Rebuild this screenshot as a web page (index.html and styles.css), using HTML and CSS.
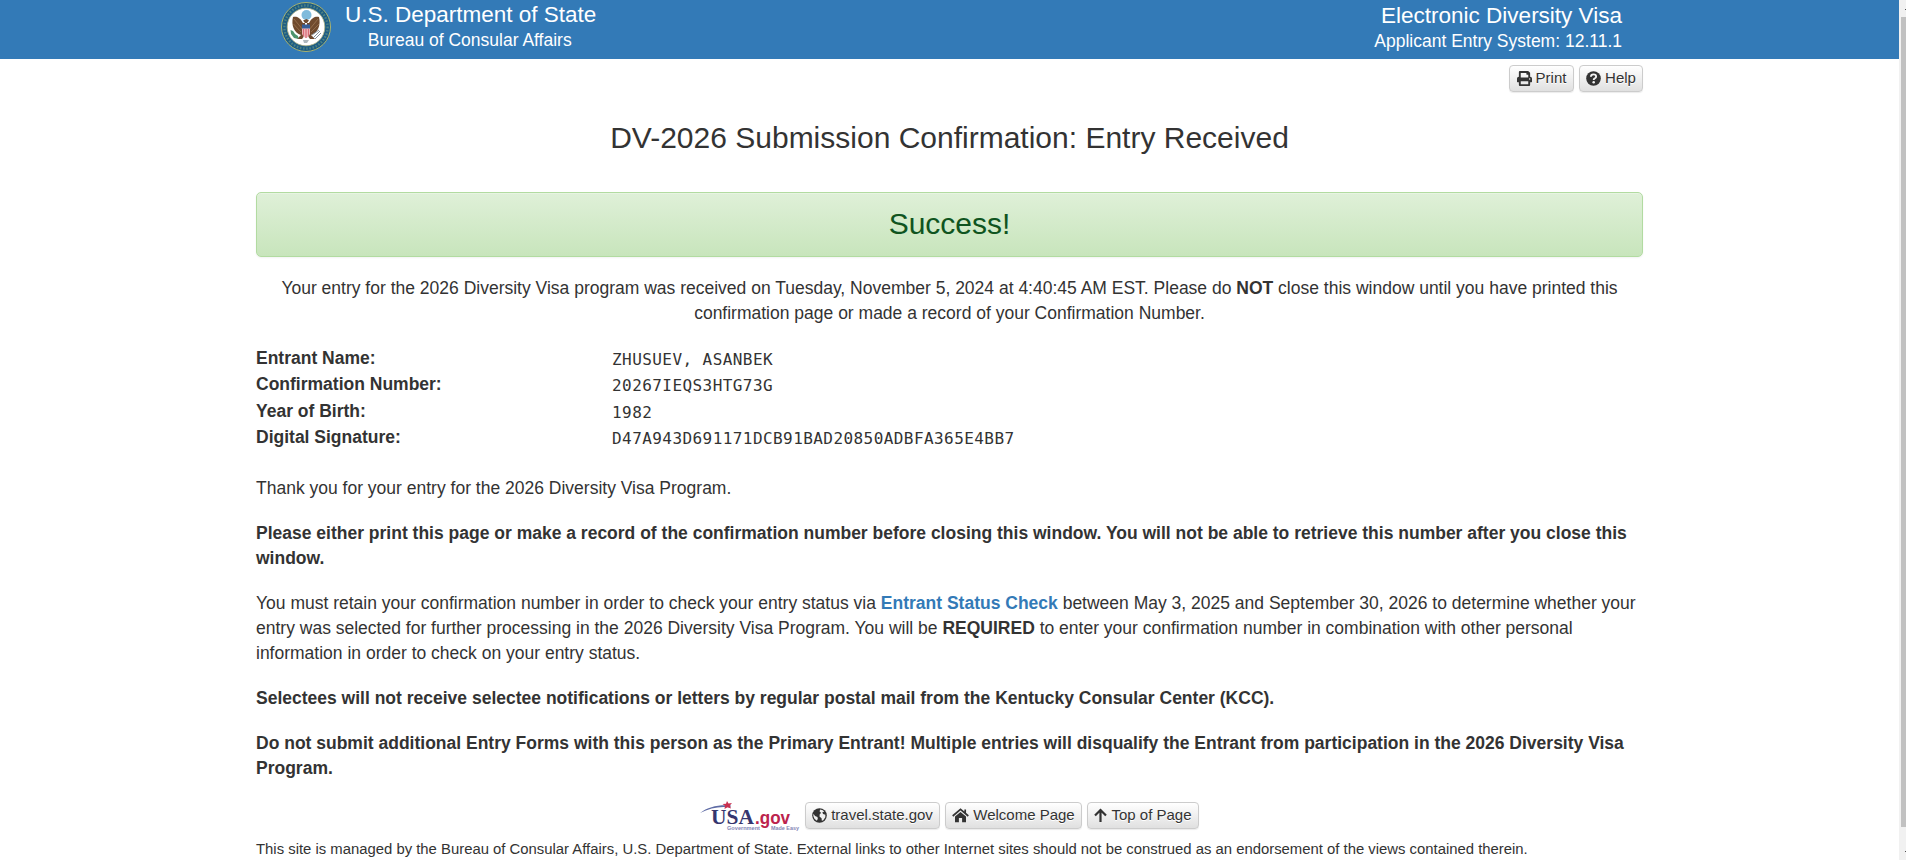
FILE: index.html
```html
<!DOCTYPE html>
<html lang="en">
<head>
<meta charset="utf-8">
<title>DV-2026 Submission Confirmation</title>
<link rel="stylesheet" href="styles.css">
</head>
<body>
<div class="viewport">
<div class="page">
  <header class="banner">
    <div class="brand">
      <svg class="seal" viewBox="0 0 50 50" width="50" height="50">
        <circle cx="25" cy="25" r="24.5" fill="#1d5c84" stroke="#a9b36f"/>
        <circle cx="25" cy="25" r="21.600" fill="none" stroke="#4e8383" stroke-width="2.400" stroke-dasharray="1.5 1.7"/>
        <circle cx="25" cy="25" r="18.8" fill="#fff" stroke="#b7b783" stroke-width=".8"/>
        <circle cx="25.500" cy="13" r="5" fill="#80bbdc"/>
        <path d="M22 21C19 15 15 14 12 15C10 23 13 31 20 33L16 37L21 37L24 33V21L22 18.500L25.500 17L28 18.500L26 21V33L29 37L34 37L30 33C37 31 40 23 38 15C35 14 31 15 28 21Z" fill="#704a2e"/>
        <path d="M13 17L22 28M12.500 22L20 30M37 17L28 28M38 22L30 30" stroke="#a27c59" stroke-width=".7"/>
        <path d="M21 23H29V32Q28 35 25 36Q22 35 21 32Z" fill="#efb9bd"/>
        <path d="M22.500 27V34M25 27V36M27.500 27V34" stroke="#d86c75" stroke-width="1.200"/>
        <path d="M21 22.500H29V26.500H21Z" fill="#355d97"/>
        <path d="M9.500 28L12 29L14 32L17 34L17.500 37L13 36L10 32Z" fill="#4c946d"/>
        <path d="M32 36L39 29M34 37L40 31M31 33L38 28" stroke="#85919a"/>
        <path d="M22 38L28 38L26 41H23Z" fill="#aeb8bd"/>
      </svg>
      <div class="brand-text">
        <div class="banner-title dept">U.S. Department of State</div>
        <div class="banner-sub bureau">Bureau of Consular Affairs</div>
      </div>
    </div>
    <div class="system">
      <div class="banner-title edv">Electronic Diversity Visa</div>
      <div class="banner-sub version">Applicant Entry System: 12.11.1</div>
    </div>
  </header>
  <main class="container">
    <nav class="toolbar">
      <a class="btn print"><svg viewBox="0 0 512 512" width="15" height="15"><path d="M448 192V77a32 32 0 0 0-9-22L393 9a32 32 0 0 0-22-9H96a32 32 0 0 0-32 32v160a64 64 0 0 0-64 64v112a16 16 0 0 0 16 16h48v96a32 32 0 0 0 32 32h320a32 32 0 0 0 32-32v-96h48a16 16 0 0 0 16-16V256a64 64 0 0 0-64-64zm-64 256H128v-96h256v96zm0-224H128V64h192v48a16 16 0 0 0 16 16h48v96zm48 72a24 24 0 1 1 0-48 24 24 0 0 1 0 48z"/></svg><span>Print</span></a>
      <a class="btn help"><svg viewBox="0 0 16 16" width="15" height="15"><circle cx="8" cy="8" r="7.800"/><path d="M5.200 6.200C5.200 4.500 6.500 3.600 8 3.600C9.700 3.600 10.800 4.600 10.800 6C10.800 7.900 8.200 7.700 8.200 9.500" fill="none" stroke="#f3f3f3" stroke-width="2"/><circle cx="8.200" cy="12" r="1.350" fill="#f3f3f3"/></svg><span>Help</span></a>
    </nav>
    <h1 class="title">DV-2026 Submission Confirmation: Entry Received</h1>
    <div class="alert">Success!</div>
    <p class="received">Your entry for the 2026 Diversity Visa program was received on Tuesday, November 5, 2024 at 4:40:45 AM EST. Please do <b>NOT</b> close this window until you have printed this<br>confirmation page or made a record of your Confirmation Number.</p>
    <dl class="record">
      <dt>Entrant Name:</dt><dd>ZHUSUEV, ASANBEK</dd>
      <dt>Confirmation Number:</dt><dd>20267IEQS3HTG73G</dd>
      <dt>Year of Birth:</dt><dd>1982</dd>
      <dt>Digital Signature:</dt><dd>D47A943D691171DCB91BAD20850ADBFA365E4BB7</dd>
    </dl>
    <p>Thank you for your entry for the 2026 Diversity Visa Program.</p>
    <p><b>Please either print this page or make a record of the confirmation number before closing this window. You will not be able to retrieve this number after you close this<br>window.</b></p>
    <p>You must retain your confirmation number in order to check your entry status via <a class="link">Entrant Status Check</a> between May 3, 2025 and September 30, 2026 to determine whether your<br>entry was selected for further processing in the 2026 Diversity Visa Program. You will be <b>REQUIRED</b> to enter your confirmation number in combination with other personal<br>information in order to check on your entry status.</p>
    <p><b>Selectees will not receive selectee notifications or letters by regular postal mail from the Kentucky Consular Center (KCC).</b></p>
    <p><b>Do not submit additional Entry Forms with this person as the Primary Entrant! Multiple entries will disqualify the Entrant from participation in the 2026 Diversity Visa<br>Program.</b></p>
    <div class="links">
      <svg class="usagov" viewBox="0 0 100 30" width="100" height="30">
        <path d="M0 12C8 6 18 3.500 31 4.500L30 6.500C20 5 10 7 0 12Z" fill="#5f6ca5"/>
        <path d="M27 0L28.500 2.600L32 2L29.800 4.600L31 7.500L27.500 6.300L24.500 8L25 4.800L22.500 3L26 2.700Z" fill="#c9304f"/>
        <text x="11" y="23" class="logo-usa" textLength="43" lengthAdjust="spacingAndGlyphs">USA</text>
        <text x="55" y="23" class="logo-gov" textLength="35" lengthAdjust="spacingAndGlyphs">.gov</text>
        <text x="27" y="28.500" class="logo-tag" textLength="33" lengthAdjust="spacingAndGlyphs">Government</text>
        <text x="71" y="28.500" class="logo-tag" textLength="28" lengthAdjust="spacingAndGlyphs">Made Easy</text>
      </svg>
      <a class="btn travel"><svg viewBox="0 0 16 16" width="15" height="15"><circle cx="8" cy="8" r="7.800"/><path d="M8.800 1.600L11.500 2.300L13 4L11 4.600L11.800 6.500L14.300 7.300L14.200 9.800L12 13L10.500 13.500L10.200 10.800L8 9L8.300 6.300L9.800 5.200L8 3.500ZM1.600 6L3.200 8.500L5.800 9.600L6.200 11.400L5.200 13.600L2.600 11.500L1.400 8.500Z" fill="#f0f0f0"/></svg><span>travel.state.gov</span></a>
      <a class="btn welcome"><svg viewBox="0 0 17 15" width="17" height="15"><path d="M8.500 4L3 8.600V14.200H6.900V10H10.100V14.200H14V8.600Z"/><path d="M.7 8L8.500 1.400L16.300 8M13.200 1.500V5" fill="none" stroke="#333" stroke-width="1.700"/></svg><span>Welcome Page</span></a>
      <a class="btn top"><svg viewBox="0 0 13 15" width="13" height="15"><path d="M1 7.500L6.500 2L12 7.500M6.500 2.500V14" fill="none" stroke="#333" stroke-width="2.200"/></svg><span>Top of Page</span></a>
    </div>
    <p class="disclaimer">This site is managed by the Bureau of Consular Affairs, U.S. Department of State. External links to other Internet sites should not be construed as an endorsement of the views contained therein.</p>
  </main>
</div>
<div class="scrollbar"><div class="up"></div><div class="thumb"></div><div class="down"></div></div>
</div>
</body>
</html>
```
FILE: styles.css
```css
* { box-sizing: border-box; }
body {
  margin: 0;
  overflow: hidden;
  background: #fff;
  color: #333;
  font: 17.5px/25px "Liberation Sans", Arial, sans-serif;
}
.viewport { display: flex; height: 860px; overflow: hidden; }
.page { width: 1899px; flex: none; }
.banner {
  height: 59px;
  background: #337ab7;
  color: #fff;
  display: flex;
  justify-content: space-between;
  padding: 0 277px 0 281px;
}
.brand { display: flex; gap: 14px; }
.seal { margin-top: 2px; display: block; }
.brand-text { text-align: center; }
.bureau { margin-right: 2px; }
.system { text-align: right; padding-top: 1px; }
.banner-title { font-size: 22.5px; line-height: 30px; white-space: nowrap; }
.banner-sub { font-size: 17.5px; line-height: 20px; white-space: nowrap; }
.container { width: 1387px; margin-left: 256px; }
.toolbar { display: flex; justify-content: flex-end; gap: 5px; padding-top: 6px; }
.btn {
  display: flex;
  align-items: center;
  justify-content: center;
  gap: 4px;
  height: 27px;
  border: 1px solid #ccc;
  border-radius: 4px;
  background: linear-gradient(#fff, #e0e0e0);
  box-shadow: 0 1px 1px rgba(0, 0, 0, .08);
  font-size: 15px;
  line-height: 22px;
  text-shadow: 0 1px 0 #fff;
  white-space: nowrap;
  color: #333;
}
.btn svg { fill: #333; flex: none; }
.btn span { margin-bottom: 1px; }
.print { width: 65px; }
.help { width: 64px; }
.title {
  margin: 30px 0 37px;
  font-size: 30px;
  line-height: 32px;
  padding-bottom: 1px;
  font-weight: 400;
  text-align: center;
}
.alert {
  height: 65px;
  border: 1px solid #b2dba1;
  border-radius: 5px;
  background: linear-gradient(#dff0d8, #c8e5bc);
  box-shadow: inset 0 1px 0 rgba(255, 255, 255, .25), 0 1px 2px rgba(0, 0, 0, .05);
  color: #0f5420;
  font-size: 30px;
  line-height: 62px;
  text-align: center;
}
p { margin: 0 0 20px; white-space: nowrap; }
.received { margin: 19px 0 20px; text-align: center; }
.record {
  display: grid;
  grid-template-columns: 356px 1fr;
  grid-auto-rows: 26.25px;
  margin: 0 0 25px;
}
.record dt { font-weight: 700; }
.record dd {
  margin: 0;
  padding-top: 1px;
  font: 16px/25px "DejaVu Sans Mono", monospace;
  letter-spacing: .43px;
}
.link { color: #337ab7; font-weight: 700; }
.links { display: flex; gap: 5px; margin: 21px 0 0 444px; }
.usagov { margin-top: -1px; }
.logo-usa { font: 700 22px "Liberation Serif", serif; fill: #35366f; }
.logo-gov { font: 700 19px "Liberation Sans", sans-serif; fill: #bc234d; }
.logo-tag { font: 700 4.5px "Liberation Sans", sans-serif; fill: #8586b6; }
.travel { width: 135px; }
.welcome { width: 137px; }
.top { width: 112px; }
.disclaimer { font-size: 14.87px; line-height: 22px; margin: 7px 0 0; }
.scrollbar { width: 7px; background: #f1f1f1; }
.up { height: 17px; }
.thumb { height: 810px; margin-left: 2px; background: #c1c1c1; }
.up, .down { position: relative; }
.up::after, .down::after {
  content: "";
  position: absolute;
  right: 0;
  top: 9px;
  width: 1px;
  height: 1px;
  background: #505050;
}
.down::after { top: 24px; }
```
